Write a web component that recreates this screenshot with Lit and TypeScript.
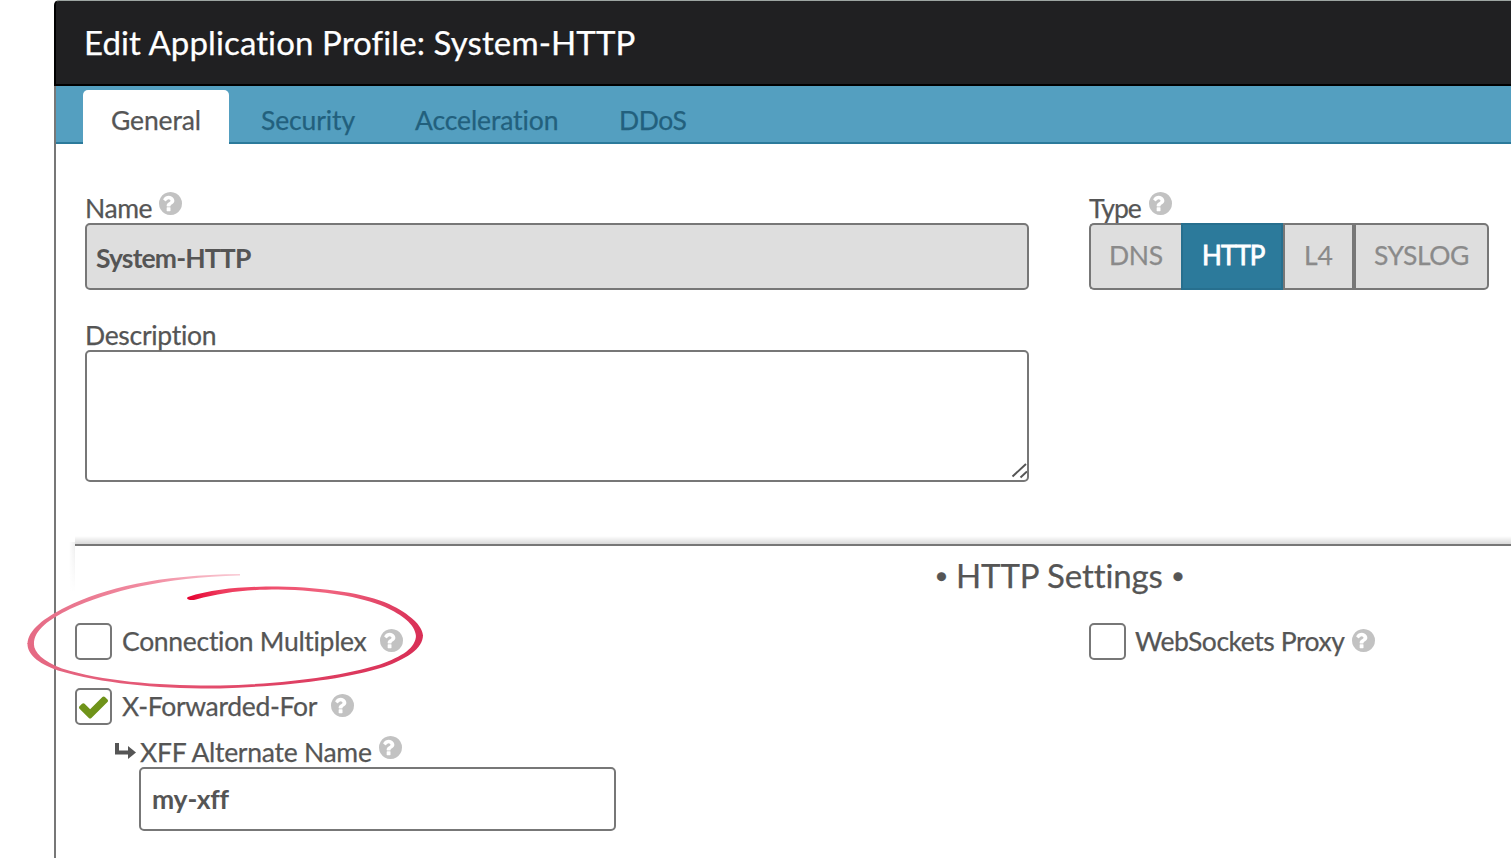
import { LitElement, html, css, svg } from "lit";
import { customElement, property } from "lit/decorators.js";

@customElement("help-icon")
class HelpIcon extends LitElement {
  static styles = css`
    :host { display: block; width: 23px; height: 23px; flex: none; }
    svg { display: block; width: 23px; height: 23px; fill: #c2c2c2; }
  `;
  render() {
    return html`<svg viewBox="128 128 1536 1536"><path d="M896 1376v-192q0-14-9-23t-23-9h-192q-14 0-23 9t-9 23v192q0 14 9 23t23 9h192q14 0 23-9t9-23zm256-672q0-88-55.5-163t-138.5-116-170-41q-243 0-371 213-15 24 8 42l132 100q7 6 19 6 16 0 25-12 53-68 86-92 34-24 86-24 48 0 85.5 26t37.5 59q0 38-20 61t-68 45q-63 28-115.5 86.5t-52.5 125.5v36q0 14 9 23t23 9h192q14 0 23-9t9-23q0-19 21.5-49.5t54.5-49.5q32-18 49-28.5t46-35 44.5-48 28-60.5 12.5-81zm512 192q0 209-103 385.5t-279.5 279.5-385.5 103-385.5-103-279.5-279.5-103-385.5 103-385.5 279.5-279.5 385.5-103 385.5 103 279.5 279.5 103 385.5z"/></svg>`;
  }
}

@customElement("check-box")
class CheckBox extends LitElement {
  @property({ type: Boolean }) checked = false;
  static styles = css`
    :host { display: flex; box-sizing: border-box; width: 37px; height: 37px; flex: none;
      border: 2px solid #777; border-radius: 5px; background: #fff;
      align-items: center; justify-content: center; }
    svg { display: block; width: 29px; height: 23px; margin-top: 2px; fill: #6f9319; }
  `;
  render() {
    return this.checked
      ? html`<svg viewBox="121 334 1550 1188"><path d="M1671 566q0 40-28 68l-724 724-136 136q-28 28-68 28t-68-28l-136-136-362-362q-28-28-28-68t28-68l136-136q28-28 68-28t68 28l294 295 656-657q28-28 68-28t68 28l136 136q28 28 28 68z"/></svg>`
      : null;
  }
}

const marker = svg`
  <defs>
    <linearGradient id="top" gradientUnits="userSpaceOnUse" x1="187" y1="0" x2="422" y2="0">
      <stop offset="0" stop-color="#e5002f"/><stop offset=".15" stop-color="#ee3c5e"/>
      <stop offset=".6" stop-color="#f0647f"/><stop offset="1" stop-color="#d92f56"/>
    </linearGradient>
    <linearGradient id="low" gradientUnits="userSpaceOnUse" x1="28" y1="0" x2="422" y2="0">
      <stop offset="0" stop-color="#e56a84"/><stop offset=".4" stop-color="#e4506f"/>
      <stop offset="1" stop-color="#d92f56"/>
    </linearGradient>
    <linearGradient id="tail" gradientUnits="userSpaceOnUse" x1="28" y1="0" x2="240" y2="0">
      <stop offset="0" stop-color="#e56a84"/><stop offset=".6" stop-color="#f28ea3"/>
      <stop offset="1" stop-color="#f28ea3" stop-opacity=".45"/>
    </linearGradient>
  </defs>
  <path fill="url(#top)" d="M188 597C214 588.500 246 586.500 278 586.500C326 587.500 365 593.500 389 604C410 614 423 626 423 636H416C415 624 402 615 385 607C360 596.500 324 590.500 278 589.500C246 589.500 222 592.500 196 599.500C190 601 185 599 188 597Z"/>
  <path fill="url(#low)" d="M423 635C423 649 406 659 384 667C346 679 290 686 220 688.500C160 689 104 684 58 670.500C36 663 27 653 27.500 643H34C33 651 42 661 62 668.500C104 681.500 160 686 220 685.500C288 683.500 340 676.500 380 664.500C402 656.500 416 648 416 635Z"/>
  <path fill="url(#tail)" d="M27.500 644C28 630 44 618 66 607C104 588 158 575 240 574V575.500C162 577.500 110 591 70 609C50 619 33.500 630 34 644Z"/>
`;

@customElement("app-root")
class AppRoot extends LitElement {
  static styles = css`
    :host { display: block; position: relative; width: 1511px; height: 859px; overflow: hidden;
      background: #fff; color: #555; font: 26.5px/32px Lato, sans-serif;
      font-variant-ligatures: none; -webkit-text-stroke: .25px currentColor; }
    * { box-sizing: border-box; }
    .dialog { margin-left: 54px; height: 858px; }
    .header { height: 86px; border: 2px solid #000; border-right: 0; border-radius: 5px 0 0 0;
      background: #202022; padding: 20px 28px;
      border-top: 1px solid #9da5a2; color: #fff; font-size: 33px; line-height: 43px; white-space: nowrap; }
    .title { letter-spacing: .11px; }
    .body { border-left: 2px solid #777; height: 772px; }
    .tabs { display: flex; height: 58px; padding-left: 27px; background: #549fc0;
      box-shadow: inset 0 -2px #2b7a9b; align-items: flex-end; letter-spacing: -.12px; }
    .tab { height: 54px; line-height: 60px; color: #22607d; white-space: nowrap; }
    .tab.on { width: 146px; padding-left: 28px; background: #fff; color: #555;
      border-radius: 5px 5px 0 0; margin-right: 32px; }
    .security { width: 154px; }
    .accel { width: 204px; }
    .tab:last-child { letter-spacing: -.4px; }
    .top { display: grid; grid-template-columns: 944px 400px; column-gap: 60px;
      padding: 46px 0 0 29px; height: 400px; align-content: start; }
    .label { display: flex; height: 33px; line-height: 36px; white-space: nowrap; align-items: flex-start; letter-spacing: -.4px; }
    .label help-icon { margin-top: 2px; }
    .name { width: 74px; }
    .type { width: 59.500px; letter-spacing: -1px; }
    .input { display: flex; align-items: center; border: 2px solid #777; border-radius: 5px;
      height: 67px; padding-left: 9px; font-weight: 700; background: #fff; -webkit-text-stroke: 0; }
    .input.off { background: #dedede; padding-top: 2px; letter-spacing: -.85px; }
    .desc { margin-top: 27px; line-height: 36px; letter-spacing: -.3px; }
    .area { display: flex; align-items: flex-end; justify-content: flex-end; height: 132px;
      border: 2px solid #777; border-radius: 5px; }
    .area svg { width: 18px; height: 18px; overflow: hidden; }
    .seg { display: flex; height: 67px; line-height: 61px; color: #8a8a8a; white-space: nowrap; letter-spacing: -.35px; }
    .seg div { background: #dedede; border: 2px solid #777; padding-left: 18px; }
    .seg .dns { width: 92px; border-right: 0; border-radius: 5px 0 0 5px; }
    .seg .http { width: 102px; background: #2c7a9b; border-color: #276f8e; color: #fff; padding-left: 19px; font-size: 26px; letter-spacing: -.9px; -webkit-text-stroke: .8px #fff; }
    .seg .l4 { width: 71px; padding-left: 19px; letter-spacing: 0; }
    .seg .sys { width: 135px; border-radius: 0 5px 5px 0; letter-spacing: -.45px; }
    .settings { margin-left: 19px; border-top: 2px solid #777; height: 314px; }
    .band { display: flex; height: 46px; padding: 8px 0 0 859.500px; font-size: 33px; line-height: 42px;
      white-space: nowrap; }
    .band b { display: block; width: 9px; height: 9px; font: 24px/42px Lato, sans-serif; }
    .band span { margin: 0 6px 0 12.500px; width: 209px; letter-spacing: -.1px; }
    .shade { position: absolute; left: 67px; top: 536px; width: 1444px; height: 56px; pointer-events: none; }
    .row { display: flex; align-items: center; height: 37px; white-space: nowrap; }
    .row span { margin-top: -2px; }
    .opts { display: grid; grid-template-columns: 1014px 1fr; padding-top: 31px; row-gap: 28px; }
    .row .t1 { width: 258px; margin-left: 10px; letter-spacing: -.3px; }
    .row .t2 { width: 208.500px; margin-left: 10px; letter-spacing: -.33px; }
    .row .t3 { width: 217px; margin-left: 9px; letter-spacing: -.46px; }
    .row help-icon { margin-top: -2px; }
    .sub { display: flex; margin: 11px 0 0 39px; }
    .arrow { width: 23px; height: 20px; margin: 5px 2px 0 0; flex: none; fill: none; }
    .field { width: 477px; }
    .field .label { height: 31px; line-height: 32px; }
    .field .label help-icon { margin-top: 0; }
    .xff { width: 240px; padding-left: 1px; letter-spacing: -.27px; }
    .field .input { height: 64px; padding-left: 11px; letter-spacing: -.2px; }
    .ring { position: absolute; left: 0; top: 0; width: 450px; height: 720px; pointer-events: none; }
  `;
  render() {
    return html`
      <div class="dialog">
        <div class="header"><span class="title">Edit Application Profile: System-HTTP</span></div>
        <div class="body">
          <div class="tabs">
            <div class="tab on"><span>General</span></div>
            <div class="tab security"><span>Security</span></div>
            <div class="tab accel"><span>Acceleration</span></div>
            <div class="tab"><span>DDoS</span></div>
          </div>
          <div class="top">
            <div>
              <div class="label"><span class="name">Name</span><help-icon></help-icon></div>
              <div class="input off"><span>System-HTTP</span></div>
              <div class="label desc"><span>Description</span></div>
              <div class="area"><svg viewBox="0 0 18 18" stroke="#555" stroke-width="2"><path d="M3.500 14.500L17 2M11.500 15.500L18 9.500"/></svg></div>
            </div>
            <div>
              <div class="label"><span class="type">Type</span><help-icon></help-icon></div>
              <div class="seg">
                <div class="dns">DNS</div><div class="http">HTTP</div><div class="l4">L4</div><div class="sys">SYSLOG</div>
              </div>
            </div>
          </div>
          <div class="settings">
            <div class="band"><b>•</b><span>HTTP Settings</span><b>•</b></div>
            <div class="opts">
              <div class="row"><check-box></check-box><span class="t1">Connection Multiplex</span><help-icon></help-icon></div>
              <div class="row"><check-box></check-box><span class="t3">WebSockets Proxy</span><help-icon></help-icon></div>
              <div class="row"><check-box checked></check-box><span class="t2">X-Forwarded-For</span><help-icon></help-icon></div>
            </div>
            <div class="sub">
              <svg class="arrow" viewBox="0 0 23 20"><path d="M3 2V11.500H15" stroke="#555" stroke-width="4"/><path d="M14 5L22 11.500L14 18Z" fill="#555"/></svg>
              <div class="field">
                <div class="label"><span class="xff">XFF Alternate Name</span><help-icon></help-icon></div>
                <div class="input"><span>my-xff</span></div>
              </div>
            </div>
          </div>
        </div>
      </div>
      <svg class="shade" viewBox="0 0 1444 56">
        <defs>
          <linearGradient id="up" x2="0" y2="1"><stop offset="0" stop-color="#000" stop-opacity="0"/><stop offset="1" stop-color="#000" stop-opacity=".15"/></linearGradient>
          <linearGradient id="side"><stop offset="0" stop-color="#000" stop-opacity="0"/><stop offset="1" stop-color="#000" stop-opacity=".06"/></linearGradient>
          <linearGradient id="fade" x2="0" y2="1"><stop offset="0" stop-color="#fff" stop-opacity="0"/><stop offset="1" stop-color="#fff"/></linearGradient>
        </defs>
        <rect x="8" y="0" width="1436" height="8" fill="url(#up)"/>
        <rect x="2" y="6" width="6" height="50" fill="url(#side)"/>
        <rect x="0" y="12" width="8" height="44" fill="url(#fade)"/>
      </svg>
      <svg class="ring" viewBox="0 0 450 720">${marker}</svg>
    `;
  }
}
